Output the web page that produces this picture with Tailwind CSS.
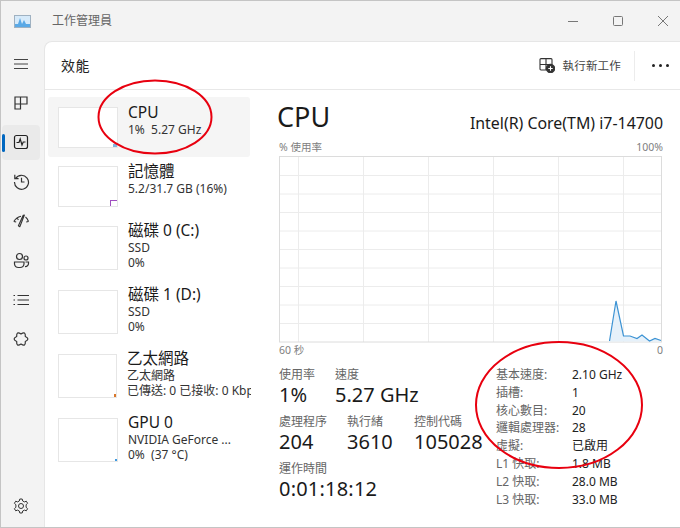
<!DOCTYPE html>
<html lang="zh-Hant">
  <head>
    <meta charset="UTF-8" />
    <title>工作管理員</title>
    <script src="https://cdn.jsdelivr.net/npm/@tailwindcss/browser@4"></script>
  </head>
  <body class="bg-white">
    <div class="relative w-[680px] h-[528px] overflow-hidden bg-[#f3f3f3] border-t border-l border-b border-[#c4c4c4] text-[#1a1a1a] font-['Noto_Sans','Noto_Sans_CJK_TC',sans-serif]">
      <!-- title bar -->
      <div class="h-[40px] flex items-center">
        <svg class="ml-[13px] w-[17px] h-[13px]" viewBox="0 0 17 13">
          <rect x="0.5" y="0.5" width="16" height="12" fill="#d6eafa" stroke="#9fb1c1" />
          <path d="M1 9 L4 9 L6 3 L8 9 L10 5 L12 9 L16 9 L16 12 L1 12 Z" fill="#5aa9e6" />
        </svg>
        <span class="ml-[21px] text-[12px] text-[#666]">工作管理員</span>
        <div class="ml-auto flex items-center pr-[12px] gap-[35px]">
          <svg class="w-[10px] h-[10px]" viewBox="0 0 10 10"><path d="M0 5.5 H10" stroke="#777" /></svg>
          <svg class="w-[10px] h-[10px]" viewBox="0 0 10 10"><rect x="0.5" y="0.5" width="9" height="9" rx="1" fill="none" stroke="#777" /></svg>
          <svg class="w-[10px] h-[10px]" viewBox="0 0 10 10"><path d="M0 0 L10 10 M10 0 L0 10" stroke="#777" /></svg>
        </div>
      </div>

      <div class="flex h-[486px]">
        <!-- sidebar -->
        <div class="w-[43px] flex flex-col pt-[5px] pr-[4px] pl-[1px] gap-[4.4px] shrink-0">
          <div class="h-[35px] flex items-center justify-center">
            <svg class="w-[16px] h-[16px]" viewBox="0 0 16 16" fill="none" stroke="#444"><path d="M1 3.5 H15 M1 8 H15 M1 12.5 H15" /></svg>
          </div>
          <div class="h-[35px] flex items-center justify-center">
            <svg class="w-[16px] h-[16px]" viewBox="0 0 16 16" fill="none" stroke="#333" stroke-width="1.2"><path d="M2 2 H14 V9 H7.5 V14 H2 Z M7.5 2 V9 M2 9 H7.5" /></svg>
          </div>
          <div class="relative h-[35px] flex items-center justify-center bg-[#eaeaea] rounded-[4px]">
            <span class="absolute left-0 top-[9px] w-[3px] h-[18px] rounded-full bg-[#0067c0]"></span>
            <svg class="w-[16px] h-[16px]" viewBox="0 0 16 16" fill="none" stroke="#222" stroke-width="1.2"><rect x="1.5" y="1.5" width="13" height="13" rx="2" /><path d="M3.5 8.5 H6 L7.2 5 L9 11 L10.2 8 H12.5" /></svg>
          </div>
          <div class="h-[35px] flex items-center justify-center">
            <svg class="w-[17px] h-[17px]" viewBox="0 0 17 17" fill="none" stroke="#333" stroke-width="1.2"><path d="M2.6 5.5 A7 7 0 1 1 1.5 9 M1.8 1.8 V5.6 H5.6 M8.5 4.8 V9 H11.5" /></svg>
          </div>
          <div class="h-[35px] flex items-center justify-center">
            <svg class="w-[16px] h-[14px]" viewBox="0 0 16 14" fill="none" stroke="#333" stroke-width="1.1"><path d="M0.8 7.5 Q3 3.5 8 2.2 M12.5 3 Q14.5 4.5 15.5 7.5 M0.8 7.5 L3.2 8 M15.5 7.5 L13.2 8 M4 3.8 L5.4 6 M11.4 1 L6.8 12.8 L5.4 11.8 L10.2 1.2 Z" stroke-linejoin="round" /></svg>
          </div>
          <div class="h-[35px] flex items-center justify-center">
            <svg class="w-[17px] h-[17px]" viewBox="0 0 17 17" fill="none" stroke="#333" stroke-width="1.2"><circle cx="6.5" cy="4.5" r="3" /><circle cx="13" cy="6" r="2" /><path d="M1.5 10 H11 V12 A4 4 0 0 1 7 15.5 H5.5 A4 4 0 0 1 1.5 12 Z M12.5 10 H15.5 V11.5 A3 3 0 0 1 12 14.5" /></svg>
          </div>
          <div class="h-[35px] flex items-center justify-center">
            <svg class="w-[16px] h-[12px]" viewBox="0 0 16 12" fill="none" stroke="#333" stroke-width="1.2"><path d="M4.5 1.5 H16 M4.5 6 H16 M4.5 10.5 H16 M0.5 1.5 H2 M0.5 6 H2 M0.5 10.5 H2" /></svg>
          </div>
          <div class="h-[35px] flex items-center justify-center">
            <svg class="w-[16px] h-[16px]" viewBox="0 0 16 16" fill="none" stroke="#333" stroke-width="1.2"><path d="M8 3 Q12.75 -0.2 12.3 5.5 Q17.5 8 12.3 10.5 Q12.75 16.2 8 13 Q3.25 16.2 3.7 10.5 Q-1.5 8 3.7 5.5 Q3.25 -0.2 8 3 Z" stroke-linejoin="round" /></svg>
          </div>
          <div class="mt-auto h-[35px] mb-[4px] flex items-center justify-center">
            <svg class="w-[16px] h-[16px]" viewBox="0 0 16 16" fill="none" stroke="#333"><circle cx="8" cy="8" r="2.5" /><path d="M6.8 1 H9.2 L9.7 3 L11.4 3.9 L13.3 3.2 L14.6 5.3 L13.1 6.7 V9.3 L14.6 10.7 L13.3 12.8 L11.4 12.1 L9.7 13 L9.2 15 H6.8 L6.3 13 L4.6 12.1 L2.7 12.8 L1.4 10.7 L2.9 9.3 V6.7 L1.4 5.3 L2.7 3.2 L4.6 3.9 L6.3 3 Z" stroke-linejoin="round" /></svg>
          </div>
        </div>

        <!-- content -->
        <div class="flex-1 flex flex-col bg-white rounded-tl-[8px] border-t border-l border-[#e6e6e6]">
          <div class="h-[48px] shrink-0 flex items-center border-b border-[#e8e8e8]">
            <span class="ml-[16px] text-[14px] tracking-[0.4px] text-[#222]">效能</span>
            <svg class="ml-auto w-[16px] h-[15px]" viewBox="0 0 16 15" fill="none" stroke="#333" stroke-width="1.1">
              <path d="M2 0.6 H12 A1 1 0 0 1 13 1.6 V6 M7 0.6 V12 H2 A1 1 0 0 1 1 11 V1.6 A1 1 0 0 1 2 0.6 M1 6.5 H13" />
              <circle cx="11.5" cy="10.5" r="4.2" fill="#333" />
              <path d="M11.5 8.3 V12.7 M9.3 10.5 H13.7" stroke="#fff" />
            </svg>
            <span class="ml-[8px] text-[11.5px] tracking-[0.2px] text-[#444]">執行新工作</span>
            <span class="ml-[13px] w-px h-[30px] bg-[#ececec]"></span>
            <div class="ml-[17px] mr-[11px] flex gap-[4px]">
              <span class="w-[3px] h-[3px] rounded-full bg-[#222]"></span>
              <span class="w-[3px] h-[3px] rounded-full bg-[#222]"></span>
              <span class="w-[3px] h-[3px] rounded-full bg-[#222]"></span>
            </div>
          </div>

          <div class="flex flex-1 min-h-0">
            <!-- device list -->
            <div class="w-[206px] shrink-0 pt-[7px] pl-[3px]">
              <div class="h-[60px] w-[202px] bg-[#f5f5f5] rounded-[3px] flex pl-[10px] gap-[10px]">
                <div class="relative mt-[10px] w-[60px] h-[41px] bg-white border border-[#e6e6e6]">
                  <span class="absolute right-0 bottom-0 w-[4px] h-[3px] bg-[#7fb5e0]"></span>
                </div>
                <div class="mt-[6px]">
                  <p class="text-[15.5px] leading-[19px]">CPU</p>
                  <p class="text-[12px] leading-[15px] text-[#333] whitespace-pre">1%  5.27 GHz</p>
                </div>
              </div>
              <div class="h-[58px] flex pl-[10px] gap-[10px]">
                <div class="relative mt-[9px] w-[60px] h-[41px] bg-white border border-[#e6e6e6]">
                  <span class="absolute right-0 bottom-0 w-[7px] h-[6px] border-l border-t border-[#a050c0]"></span>
                </div>
                <div class="mt-[5px]">
                  <p class="text-[15.5px] leading-[19px]">記憶體</p>
                  <p class="text-[12px] leading-[15px] text-[#333]">5.2/31.7 GB (16%)</p>
                </div>
              </div>
              <div class="h-[64px] flex pl-[10px] gap-[10px]">
                <div class="mt-[11px] w-[60px] h-[44px] bg-white border border-[#e6e6e6]"></div>
                <div class="mt-[6px]">
                  <p class="text-[15.5px] leading-[19px]">磁碟 0 (C:)</p>
                  <p class="text-[12px] leading-[15px] text-[#333]">SSD</p>
                  <p class="text-[12px] leading-[15px] text-[#333]">0%</p>
                </div>
              </div>
              <div class="h-[64px] flex pl-[10px] gap-[10px]">
                <div class="mt-[11px] w-[60px] h-[44px] bg-white border border-[#e6e6e6]"></div>
                <div class="mt-[6px]">
                  <p class="text-[15.5px] leading-[19px]">磁碟 1 (D:)</p>
                  <p class="text-[12px] leading-[15px] text-[#333]">SSD</p>
                  <p class="text-[12px] leading-[15px] text-[#333]">0%</p>
                </div>
              </div>
              <div class="h-[64px] flex pl-[10px] gap-[10px]">
                <div class="relative mt-[11px] w-[60px] h-[44px] bg-white border border-[#e6e6e6]">
                  <span class="absolute right-0 bottom-0 w-[2px] h-[3px] bg-[#d9772b]"></span>
                </div>
                <div class="mt-[6px]">
                  <p class="text-[15.5px] leading-[19px]">乙太網路</p>
                  <p class="text-[12px] leading-[15px] text-[#333]">乙太網路</p>
                  <p class="w-[124px] overflow-hidden text-[12px] leading-[15px] text-[#333] whitespace-nowrap">已傳送: 0 已接收: 0 Kbps</p>
                </div>
              </div>
              <div class="h-[64px] flex pl-[10px] gap-[10px]">
                <div class="relative mt-[11px] w-[60px] h-[44px] bg-white border border-[#e6e6e6]">
                  <span class="absolute right-0 bottom-0 w-[2px] h-[2px] bg-[#3f9ae0]"></span>
                </div>
                <div class="mt-[6px]">
                  <p class="text-[15.5px] leading-[19px]">GPU 0</p>
                  <p class="text-[12px] leading-[15px] text-[#333]">NVIDIA GeForce ...</p>
                  <p class="text-[12px] leading-[15px] text-[#333] whitespace-pre">0%  (37 °C)</p>
                </div>
              </div>
            </div>

            <!-- cpu detail -->
            <div class="flex-1 pl-[26px] pr-[17px] pt-[10px]">
              <div class="flex items-end justify-between h-[34px]">
                <span class="text-[27px] leading-[34px]">CPU</span>
                <span class="text-[15.9px] leading-[22px]">Intel(R) Core(TM) i7-14700</span>
              </div>
              <div class="mt-[6px] pl-[2px] flex justify-between text-[10.5px] leading-[14px] text-[#808080]">
                <span>% 使用率</span><span>100%</span>
              </div>
              <svg class="block mt-[2px] ml-[2px]" width="383" height="187" viewBox="0 0 383 187" fill="none">
                <g stroke="#ececec">
                  <path d="M0 19.5 H382 M0 38 H382 M0 56.5 H382 M0 75 H382 M0 93.5 H382 M0 112 H382 M0 130.5 H382 M0 149 H382 M0 167.5 H382" />
                  <path d="M19.5 0 V186 M84.5 0 V186 M149.5 0 V186 M214.5 0 V186 M279.5 0 V186 M344.5 0 V186" />
                  <rect x="0.5" y="0.5" width="382" height="185.5" stroke="#dcdcdc" />
                </g>
                <path d="M330.5 185 L337 145 L344.5 180 L351 180 L358 182.5 L363 179 L370.5 185 L376 182.5 L382 184.5 V185.5 H330.5 Z" fill="#e6f1fa" />
                <path d="M330.5 185 L337 145 L344.5 180 L351 180 L358 182.5 L363 179 L370.5 185 L376 182.5 L382 184.5" stroke="#3c93d4" stroke-width="1.2" />
              </svg>
              <div class="pl-[2px] flex justify-between text-[10.5px] leading-[14px] text-[#808080]">
                <span>60 秒</span><span>0</span>
              </div>

              <div class="mt-[10px] flex">
                <div class="w-[219px] shrink-0 pl-[2px]">
                  <div class="flex">
                    <div class="w-[56px]">
                      <p class="text-[12px] leading-[16px] text-[#666]">使用率</p>
                      <p class="text-[20px] leading-[24px]">1%</p>
                    </div>
                    <div>
                      <p class="text-[12px] leading-[16px] text-[#666]">速度</p>
                      <p class="text-[20px] leading-[24px]">5.27 GHz</p>
                    </div>
                  </div>
                  <div class="flex mt-[7px]">
                    <div class="w-[68px]">
                      <p class="text-[12px] leading-[16px] text-[#666]">處理程序</p>
                      <p class="text-[20px] leading-[24px]">204</p>
                    </div>
                    <div class="w-[67px]">
                      <p class="text-[12px] leading-[16px] text-[#666]">執行緒</p>
                      <p class="text-[20px] leading-[24px]">3610</p>
                    </div>
                    <div>
                      <p class="text-[12px] leading-[16px] text-[#666]">控制代碼</p>
                      <p class="text-[20px] leading-[24px]">105028</p>
                    </div>
                  </div>
                  <div class="mt-[7px]">
                    <p class="text-[12px] leading-[16px] text-[#666]">運作時間</p>
                    <p class="text-[20px] leading-[24px] tracking-[0.2px]">0:01:18:12</p>
                  </div>
                </div>
                <div class="grid grid-cols-[76px_1fr] auto-rows-[17.8px] -mt-[1px] text-[12px] leading-[17.8px] text-[#222] whitespace-nowrap">
                  <span class="text-[#666]">基本速度:</span><span>2.10 GHz</span>
                  <span class="text-[#666]">插槽:</span><span>1</span>
                  <span class="text-[#666]">核心數目:</span><span>20</span>
                  <span class="text-[#666]">邏輯處理器:</span><span>28</span>
                  <span class="text-[#666]">虛擬:</span><span>已啟用</span>
                  <span class="text-[#666]">L1 快取:</span><span>1.8 MB</span>
                  <span class="text-[#666]">L2 快取:</span><span>28.0 MB</span>
                  <span class="text-[#666]">L3 快取:</span><span>33.0 MB</span>
                </div>
              </div>
            </div>
          </div>
        </div>
      </div>

      <!-- red annotation circles -->
      <svg class="absolute -left-px -top-px pointer-events-none" width="680" height="528" viewBox="0 0 680 528" fill="none" stroke="#e8000f" stroke-width="2">
        <ellipse cx="155" cy="117" rx="56.5" ry="36.5" />
        <ellipse cx="559" cy="405" rx="83" ry="63" />
      </svg>
    </div>
  </body>
</html>
